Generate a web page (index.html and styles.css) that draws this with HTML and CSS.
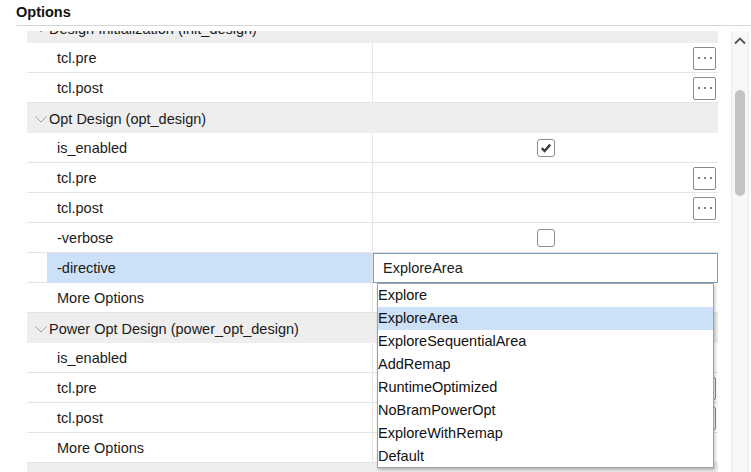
FILE: index.html
```html
<!DOCTYPE html>
<html>
<head>
<meta charset="utf-8">
<link rel="stylesheet" href="styles.css">
</head>
<body>
<div class="title">Options</div>
<div class="body">
  <div class="viewport">
    <div class="tree">
      <div class="group"><svg class="chev" width="12" height="7" viewBox="0 0 12 7"><polyline points="0.5,0.5 6,6 11.5,0.5"/></svg>Design Initialization (init_design)</div>
      <div class="row"><div class="name">tcl.pre</div><div class="val end"><span class="more"><i></i><i></i><i></i></span></div></div>
      <div class="row"><div class="name">tcl.post</div><div class="val end"><span class="more"><i></i><i></i><i></i></span></div></div>

      <div class="group"><svg class="chev" width="12" height="7" viewBox="0 0 12 7"><polyline points="0.5,0.5 6,6 11.5,0.5"/></svg>Opt Design (opt_design)</div>
      <div class="row"><div class="name">is_enabled</div><div class="val"><span class="cb"><svg width="14" height="14" viewBox="0 0 14 14"><polyline points="2.8,7.2 5.6,10 11.2,3.6"/></svg></span></div></div>
      <div class="row"><div class="name">tcl.pre</div><div class="val end"><span class="more"><i></i><i></i><i></i></span></div></div>
      <div class="row"><div class="name">tcl.post</div><div class="val end"><span class="more"><i></i><i></i><i></i></span></div></div>
      <div class="row"><div class="name">-verbose</div><div class="val"><span class="cb"></span></div></div>
      <div class="row sel"><div class="name">-directive</div><div class="val">
        <div class="combo">ExploreArea</div>
        <ul class="dropdown">
          <li>Explore</li>
          <li class="hl">ExploreArea</li>
          <li>ExploreSequentialArea</li>
          <li>AddRemap</li>
          <li>RuntimeOptimized</li>
          <li>NoBramPowerOpt</li>
          <li>ExploreWithRemap</li>
          <li>Default</li>
        </ul>
      </div></div>
      <div class="row"><div class="name">More Options</div><div class="val"></div></div>

      <div class="group"><svg class="chev" width="12" height="7" viewBox="0 0 12 7"><polyline points="0.5,0.5 6,6 11.5,0.5"/></svg>Power Opt Design (power_opt_design)</div>
      <div class="row"><div class="name">is_enabled</div><div class="val"><span class="cb"></span></div></div>
      <div class="row"><div class="name">tcl.pre</div><div class="val end"><span class="more"><i></i><i></i><i></i></span></div></div>
      <div class="row"><div class="name">tcl.post</div><div class="val end"><span class="more"><i></i><i></i><i></i></span></div></div>
      <div class="row"><div class="name">More Options</div><div class="val"></div></div>

      <div class="group"></div>
    </div>
  </div>
  <div class="scrollbar">
    <svg class="up" width="12" height="8" viewBox="0 0 12 8"><polyline points="1,6.5 6,1.5 11,6.5"/></svg>
    <div class="thumb"></div>
  </div>
</div>
</body>
</html>
```

FILE: styles.css
```css
html, body {
  margin: 0;
  padding: 0;
}
body {
  width: 751px;
  height: 472px;
  overflow: hidden;
  background: #ffffff;
  font-family: "Liberation Sans", Arial, sans-serif;
  font-size: 14.5px;
  color: #1b1b1b;
}
.title {
  margin-left: 16px;
  height: 25px;
  line-height: 25px;
  border-bottom: 1px solid #d6d6d6;
  font-weight: bold;
  color: #111;
}
.body {
  display: flex;
  padding-top: 5px;
  height: 441px;
}
.viewport {
  margin-left: 27px;
  width: 691px;
  height: 441px;
  overflow: hidden;
}
.tree {
  margin-top: -18px;
}
.group {
  height: 30px;
  background: #eeeeee;
  display: flex;
  align-items: center;
  padding-left: 8px;
  padding-top: 1px;
  box-sizing: border-box;
  white-space: nowrap;
}
.chev {
  margin-right: 2px;
  margin-top: 1px;
}
.chev polyline {
  fill: none;
  stroke: #a0a0a0;
  stroke-width: 1;
}
.row {
  display: grid;
  grid-template-columns: 345px 346px;
  height: 30px;
  box-sizing: border-box;
  border-bottom: 1px solid #e4e4e4;
}
.name {
  margin-left: 20px;
  padding-left: 10px;
  padding-top: 1px;
  line-height: 29px;
  white-space: nowrap;
}
.row.sel .name {
  background: #cce0f8;
}
.val {
  position: relative;
  border-left: 1px solid #e6e6e6;
  display: flex;
  align-items: center;
  justify-content: center;
}
.val.end {
  justify-content: flex-end;
  padding-right: 2px;
}
.more {
  width: 23px;
  height: 23px;
  box-sizing: border-box;
  border: 1px solid #8a8a8a;
  border-radius: 2px;
  background: #fff;
  display: flex;
  align-items: center;
  justify-content: center;
  gap: 4px;
}
.more i {
  display: block;
  width: 2px;
  height: 2px;
  background: #555;
  border-radius: 1px;
}
.cb {
  width: 18px;
  height: 18px;
  box-sizing: border-box;
  border: 1.5px solid #8c8c8c;
  border-radius: 3px;
  background: #fff;
  display: flex;
  align-items: center;
  justify-content: center;
}
.cb polyline {
  fill: none;
  stroke: #3c3c3c;
  stroke-width: 2.4;
}
.combo {
  align-self: stretch;
  flex: 1;
  box-sizing: border-box;
  border: 1px solid #7a9dc0;
  background: #fff;
  padding-left: 9px;
  padding-top: 1px;
  line-height: 27px;
  height: 30px;
  margin-bottom: -1px;
}
.dropdown {
  position: absolute;
  left: 4px;
  top: 30px;
  width: 337px;
  height: 185px;
  box-sizing: border-box;
  margin: 0;
  padding: 0;
  list-style: none;
  background: #fff;
  border: 1px solid #a3a3a3;
  box-shadow: 1px 2px 3px rgba(0, 0, 0, 0.25);
  z-index: 5;
}
.dropdown li {
  height: 23px;
  line-height: 23px;
  padding-left: 0;
  color: #111;
  white-space: nowrap;
}
.dropdown li.hl {
  background: #cce0f8;
}
.scrollbar {
  margin-left: 13px;
  width: 18px;
  height: 441px;
  box-sizing: border-box;
  background: #f7f7f7;
  border-left: 1px solid #ebebeb;
  border-right: 1px solid #ebebeb;
  display: flex;
  flex-direction: column;
  align-items: center;
}
.up {
  margin-top: 6px;
}
.up polyline {
  fill: none;
  stroke: #555;
  stroke-width: 1.8;
}
.thumb {
  margin-top: 45px;
  width: 10px;
  height: 106px;
  border-radius: 5px;
  background: #c3c3c3;
}
```
